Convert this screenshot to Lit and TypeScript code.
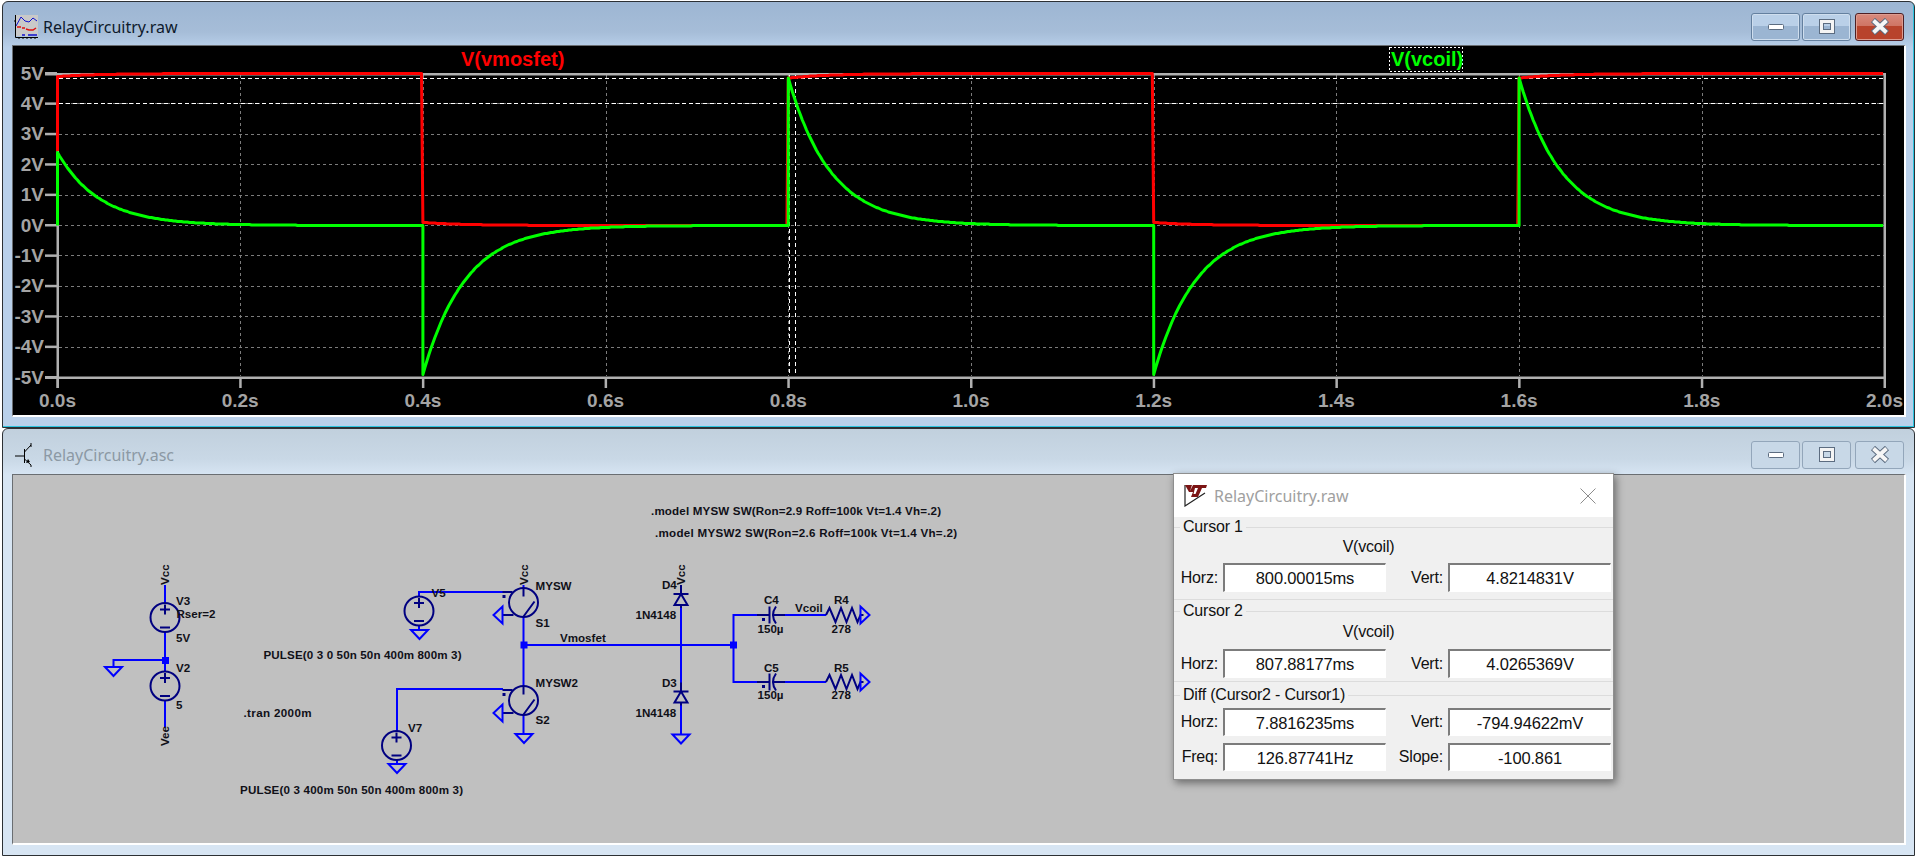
import { LitElement, css, html, svg } from "lit";
import { customElement } from "lit/decorators.js";

// plot scale: page coordinates, the svg viewBox starts at the plot's corner
const px = (t: number) => 57.5 + t * 913.5;
const py = (v: number) => 225.5 - v * 30.4;
const TAU = 0.046;

const pulses = [
  { t: 0, peak: 2.4 },
  { t: 0.4, peak: -4.9 },
  { t: 0.8, peak: 4.85 },
  { t: 1.2, peak: -4.9 },
  { t: 1.6, peak: 4.85 },
];

function decayPoints(t0: number, t1: number, fn: (dt: number) => number) {
  const out: string[] = [];
  for (let x = px(t0); x <= px(t1) + 0.01; x += 2) {
    const dt = (x - px(t0)) / 913.5;
    out.push(`${x.toFixed(1)},${(Math.round(py(fn(dt)) * 2) / 2).toFixed(1)}`);
  }
  return out;
}

function greenTrace() {
  const pts: string[] = [];
  pulses.forEach((p) => {
    pts.push(`${px(p.t)},${py(0)}`);
    pts.push(...decayPoints(p.t, p.t + 0.4, (dt) => p.peak * Math.exp(-dt / TAU)));
  });
  return pts.join(" ");
}

function redTrace() {
  const pts: string[] = [`${px(0)},${py(2.45)}`];
  pulses.forEach((p, i) => {
    const high = i % 2 === 0;
    const gap = i === 0 ? 0.1 : 0.15;
    pts.push(
      ...decayPoints(p.t, p.t + 0.4, (dt) =>
        high ? 5 - gap * Math.exp(-dt / TAU) : 0.1 * Math.exp(-dt / TAU)
      )
    );
  });
  return pts.join(" ");
}

const volts = [5, 4, 3, 2, 1, 0, -1, -2, -3, -4, -5];
const times = [0, 0.2, 0.4, 0.6, 0.8, 1.0, 1.2, 1.4, 1.6, 1.8, 2.0];

function plot() {
  return html`<svg class="canvas" viewBox="13 46 1891 369" width="1891" height="369">
    <rect x="13" y="46" width="1891" height="369" fill="#000"></rect>
    ${volts.slice(1, -1).map(
      (v) => svg`<line class="grid" x1="59" x2="1884" y1=${py(v)} y2=${py(v)}></line>`
    )}
    ${times.slice(1, -1).map(
      (t) =>
        svg`<line class="grid" x1=${Math.round(px(t)) + 0.5} x2=${Math.round(px(t)) + 0.5} y1="75" y2="376"></line>`
    )}
    <rect class="axis" x="56.5" y="73" width="2.5" height="315"></rect>
    <rect class="axis" x="1883.5" y="73" width="2.5" height="305"></rect>
    <rect class="axis" x="45" y="73" width="1841" height="2.5"></rect>
    <rect class="axis" x="45" y="376.5" width="1841" height="2.5"></rect>
    ${volts.map(
      (v) => svg`<rect class="axis" x="45" y=${py(v) - 1.5} width="12" height="2.5"></rect>
        <text class="tick" x="44" y=${py(v) + 6} text-anchor="end">${v}V</text>`
    )}
    ${times.map(
      (t) => svg`<rect class="axis" x=${px(t) - 1} y="377" width="2.5" height="11"></rect>
        <text class="tick" x=${px(t)} y="406.5" text-anchor="middle">${t.toFixed(1)}s</text>`
    )}
    <line class="cursor" x1="59" x2="1884" y1="78.5" y2="78.5"></line>
    <line class="cursor" x1="59" x2="1884" y1="103.5" y2="103.5"></line>
    <line class="cursor" x1="789.5" x2="789.5" y1="75" y2="376"></line>
    <line class="cursor" x1="795.5" x2="795.5" y1="75" y2="376"></line>
    <polyline class="trace" stroke="#ff0000" points=${redTrace()}></polyline>
    <polyline class="trace" stroke="#00ff00" points=${greenTrace()}></polyline>
    <text class="legend" x="461" y="66" fill="#ff0000">V(vmosfet)</text>
    <rect class="focus" x="1389.5" y="47.5" width="73" height="24"></rect>
    <text class="legend" x="1391" y="66" fill="#00ff00">V(vcoil)</text>
  </svg>`;
}

// schematic parts, all drawn around their page position
const wire = (d: string) => svg`<path class="wire" d=${d}></path>`;
const part = (d: string) => svg`<path class="part" d=${d}></path>`;
const dot = (x: number, y: number) =>
  svg`<rect x=${x - 3.5} y=${y - 3.5} width="7" height="7" fill="#0000ff"></rect>`;
const label = (x: number, y: number, t: string) =>
  svg`<text class="lbl" x=${x} y=${y}>${t}</text>`;
// long directive lines: width measured off the reference
const directive = (x: number, y: number, w: number, t: string) =>
  svg`<text class="lbl" x=${x} y=${y} textLength=${w} lengthAdjust="spacing">${t}</text>`;
const vlabel = (x: number, y: number, t: string) =>
  svg`<text class="lbl" x=${x} y=${y} transform="rotate(-90 ${x} ${y})">${t}</text>`;

const source = (x: number, y: number) => svg`
  <circle class="part" cx=${x} cy=${y} r="14.5"></circle>
  ${part(`M${x - 5} ${y - 8}h10M${x} ${y - 13}v10M${x - 5} ${y + 10}h10`)}`;

const groundDown = (x: number, y: number) =>
  wire(`M${x - 8.5} ${y}h17l-8.5 9z`);
const groundLeft = (x: number, y: number) =>
  wire(`M${x} ${y - 8.5}v17l-9 -8.5z`);
const groundRight = (x: number, y: number) =>
  wire(`M${x} ${y - 8.5}v17l9 -8.5z`);

const switchPart = (x: number, y: number) => svg`
  <circle class="part" cx=${x} cy=${y} r="14.5"></circle>
  ${part(
    `M${x} ${y - 14}v8M${x} ${y + 14}L${x + 11} ${y - 1}M${x - 21} ${y - 10.5}h10M${x - 21} ${y + 12.5}h11`
  )}
  <rect x=${x - 21} y=${y - 7.5} width="3" height="3" fill="#000080"></rect>`;

const diode = (x: number, y: number) =>
  part(`M${x} ${y - 9}v9M${x - 7.5} ${y}h15M${x} ${y}l-6.5 11h13zM${x} ${y + 11}v3`);

const cap = (y: number) => svg`
  ${part(`M757 ${y}h12.5M769.5 ${y - 8.5}v17M776 ${y - 8.5}Q770 ${y} 776 ${y + 8.5}M773 ${y}h12`)}
  <rect x="762" y=${y + 3} width="3" height="3" fill="#000080"></rect>`;

const resistor = (y: number) =>
  part(
    `M826 ${y}l3.5 -7l6 14l5.5 -14l5.5 14l5.5 -14l5.5 14l3 -7h3`
  );

function schematic() {
  return html`<svg class="canvas" viewBox="13 475 1891 368" width="1891" height="368">
    <rect x="13" y="475" width="1891" height="368" fill="#c0c0c0"></rect>

    ${wire("M165 585V603M165 632V672M165 700V727M165 660H113.5V667")}
    ${source(165, 617.5)} ${source(165, 686)} ${groundDown(113.5, 667)} ${dot(165.5, 660.5)}
    ${vlabel(168.5, 585, "Vcc")} ${vlabel(168.5, 746, "Vee")}
    ${label(176, 605, "V3")} ${label(176.5, 618, "Rser=2")} ${label(176, 642, "5V")}
    ${label(176, 672, "V2")} ${label(176, 709, "5")}

    ${wire("M419 597V592H503M419 625V630")} ${source(419, 611)} ${groundDown(419.5, 630)}
    ${label(431.5, 597, "V5")}
    ${wire("M397 731V689H503M397 760V764")} ${source(396.5, 745.5)} ${groundDown(397, 764)}
    ${label(408, 732, "V7")}

    ${wire("M523.5 585V589M523.5 617V686M523.5 715V734")}
    ${switchPart(523.5, 602.5)} ${switchPart(523.5, 700.5)}
    ${groundLeft(502.5, 615)} ${groundLeft(502.5, 713)} ${groundDown(524, 734)}
    ${vlabel(527.5, 585, "Vcc")}
    ${label(535.5, 590, "MYSW")} ${label(535.5, 627, "S1")}
    ${label(535.5, 687, "MYSW2")} ${label(535.5, 724, "S2")}
    ${directive(263.5, 659, 198, "PULSE(0 3 0 50n 50n 400m 800m 3)")}
    ${directive(243.5, 717, 68, ".tran 2000m")}
    ${directive(240, 794, 223, "PULSE(0 3 400m 50n 50n 400m 800m 3)")}
    ${directive(651, 515, 290, ".model MYSW SW(Ron=2.9 Roff=100k Vt=1.4 Vh=.2)")}
    ${directive(655, 537, 302, ".model MYSW2 SW(Ron=2.6 Roff=100k Vt=1.4 Vh=.2)")}

    ${wire("M524 645H733M681 608V688M681 705V734M757 615H733.5V682H757M785 615H826M785 682H826")}
    ${dot(524, 645)} ${dot(733.5, 645)}
    ${label(560, 642, "Vmosfet")}
    ${diode(681, 594)} ${diode(681, 691.5)} ${groundDown(681, 734.5)}
    ${vlabel(684.5, 585, "Vcc")}
    ${label(662, 589, "D4")} ${label(635.5, 619, "1N4148")}
    ${label(662, 687, "D3")} ${label(635.5, 717, "1N4148")}

    ${cap(615)} ${cap(682)} ${resistor(615)} ${resistor(682)}
    ${groundRight(860.5, 615)} ${groundRight(860.5, 682)}
    ${label(764, 604, "C4")} ${label(757.5, 633, "150µ")} ${label(795, 612, "Vcoil")}
    ${label(834, 604, "R4")} ${label(831.5, 633, "278")}
    ${label(764, 672, "C5")} ${label(757.5, 699, "150µ")}
    ${label(834, 672, "R5")} ${label(831.5, 699, "278")}
  </svg>`;
}

const plotIcon = html`<svg class="icon" viewBox="0 0 24 24" width="24" height="24">
  <rect x="1" y="0" width="23" height="21" fill="#c9c9c9"></rect>
  <path d="M2 11L7 2L11 6L15 7L19 3L23 6" fill="none" stroke="#1010d0"></path>
  <path d="M3 12h4M8 13h3M12 14l3 1h4l3 -2" fill="none" stroke="#e01010" stroke-width="1.5"></path>
  <path d="M1.5 0V22.5H24M1.5 6h-1.5M5 22v2M9 22v2M13 22v2M17 22v2M21 22v2" fill="none" stroke="#000"></path>
  <path d="M8 20h3M14 20h9" fill="none" stroke="#1010d0" stroke-width="1.5"></path>
</svg>`;

const fetIcon = html`<svg class="icon" viewBox="0 0 24 24" width="24" height="24">
  <path d="M1 13H10M10.5 6V20M10.5 9L17 2M17 0V4M10.5 16L17 22V24" fill="none" stroke="#000"></path>
  <path d="M12 20l4 -1l-2 -3z" fill="#000"></path>
</svg>`;

const ltIcon = html`<svg viewBox="0 0 24 23" width="24" height="23">
  <path d="M1 1V22L21 9" fill="none" stroke="#222" stroke-width="1.2"></path>
  <path d="M1 1H8L6 7L9 1H23L22 4H18L14 13L7 13L9 8H5z" fill="#7b1414"></path>
  <path d="M11 4h3l-2.5 6h-2z" fill="#fff"></path>
</svg>`;

const glyphs = {
  min: html`<svg viewBox="0 0 20 10" width="20" height="10">
    <rect x="2.5" y="2.5" width="15" height="5" rx="1" fill="#fff" stroke="#5c6c80"></rect>
  </svg>`,
  max: html`<svg viewBox="0 0 20 18" width="20" height="18">
    <rect x="2.5" y="1.5" width="15" height="14" fill="none" stroke="#5c6c80" stroke-width="1"></rect>
    <rect x="4.5" y="3.5" width="11" height="10" fill="none" stroke="#f4f4f4" stroke-width="3"></rect>
    <rect x="6.5" y="5.5" width="7" height="6" fill="none" stroke="#5c6c80"></rect>
  </svg>`,
  close: html`<svg viewBox="0 0 20 18" width="20" height="18">
    <path d="M3 2L17 15M17 2L3 15" stroke="#5c6c80" stroke-width="6"></path>
    <path d="M3.5 2.5L16.5 14.5M16.5 2.5L3.5 14.5" stroke="#f6f6f6" stroke-width="4"></path>
  </svg>`,
};

function titleBar(icon: unknown, title: string) {
  return html`<div class="title-bar">
    <div class="caption">${icon}<span>${title}</span></div>
    <div class="buttons">
      <div class="btn">${glyphs.min}</div>
      <div class="btn">${glyphs.max}</div>
      <div class="btn close">${glyphs.close}</div>
    </div>
  </div>`;
}

function fieldRow(l1: string, v1: string, l2: string, v2: string) {
  return html`<div class="row">
    <span class="key">${l1}</span><div class="value">${v1}</div>
    <span class="key">${l2}</span><div class="value">${v2}</div>
  </div>`;
}

@customElement("app-root")
export class AppRoot extends LitElement {
  static styles = css`
    :host {
      display: block;
      width: 1919px;
      height: 858px;
      overflow: hidden;
      background: #fff;
      font-family: "Liberation Sans", Arial, sans-serif;
    }
    .stack {
      display: flex;
      flex-direction: column;
      padding: 1px 0 0 2px;
      width: 1913px;
    }
    .win {
      position: relative;
      border: 1px solid #2c3034;
      border-radius: 6px 6px 0 0;
      padding-bottom: 10px;
    }
    .active {
      background: linear-gradient(#9db6d3 0, #a6bdd8 30px, #b9d0ea 46px, #b9d0ea 100%);
      box-shadow: inset -1px -1px 0 #2cc4e0;
    }
    .inactive {
      background: linear-gradient(#c1d0dd 0, #c9d8e6 30px, #d7e5f3 46px, #d7e5f3 100%);
    }
    .title-bar {
      display: flex;
      justify-content: space-between;
      height: 43px;
      box-sizing: border-box;
      padding: 11px 10px 0 11px;
    }
    .inactive .title-bar {
      height: 45px;
      padding-top: 12px;
    }
    .caption {
      display: flex;
      align-items: flex-start;
      gap: 5px;
      font: 16px/24px "Noto Sans", sans-serif;
      color: #0e1a2c;
    }
    .inactive .caption {
      color: #8c99a4;
    }
    .icon {
      margin-top: 2px;
    }
    .caption span {
      margin-top: 2px;
    }
    .buttons {
      display: flex;
      gap: 2px;
    }
    .btn {
      width: 49px;
      height: 28px;
      box-sizing: border-box;
      border: 1px solid #64809f;
      border-radius: 3px;
      display: flex;
      align-items: center;
      justify-content: center;
      background: linear-gradient(#bad0e8 0, #bad0e8 45%, #9bb5d2 46%, #9bb5d2 100%);
      box-shadow: inset 0 0 0 1px #cfdeee;
    }
    .btn.close {
      margin-left: 2px;
      border-color: #4e1f24;
      background: linear-gradient(#d98a7d 0, #cf7565 45%, #b8432c 46%, #b8432c 100%);
      box-shadow: inset 0 0 0 1px #dd9c90;
    }
    .inactive .btn {
      border-color: #93a6ba;
      background: #c8d8e7;
      box-shadow: none;
    }
    .frame {
      margin: 0 8px 0 9px;
      border-style: solid;
      border-width: 1px 2px 2px 1px;
      border-color: #6a6e72 #fff #fff #6a6e72;
      line-height: 0;
    }
    .canvas {
      display: block;
    }
    .grid {
      stroke: #7c7c7c;
      stroke-width: 1;
      stroke-dasharray: 3 3;
      shape-rendering: crispEdges;
    }
    .axis {
      fill: #b0b0b0;
    }
    .tick {
      font: bold 19px "Liberation Sans", Arial, sans-serif;
      fill: #a4a4a4;
    }
    .cursor {
      stroke: #fff;
      stroke-width: 1;
      stroke-dasharray: 4 3;
      shape-rendering: crispEdges;
    }
    .trace {
      fill: none;
      stroke-width: 3;
      stroke-linejoin: round;
    }
    .legend {
      font: bold 20px "Liberation Sans", Arial, sans-serif;
    }
    .focus {
      fill: none;
      stroke: #fff;
      stroke-dasharray: 2 2;
      shape-rendering: crispEdges;
    }
    .wire {
      fill: none;
      stroke: #0000ff;
      stroke-width: 2;
    }
    .part {
      fill: none;
      stroke: #000080;
      stroke-width: 2;
    }
    .lbl {
      font: bold 11.6px "Liberation Sans", Arial, sans-serif;
      fill: #101018;
    }
    .dialog {
      position: absolute;
      left: 1170px;
      top: 44px;
      width: 441px;
      height: 307px;
      box-sizing: border-box;
      border: 1px solid #8f8f8f;
      background: #f0f0f0;
      box-shadow: 2px 3px 8px rgba(0, 0, 0, 0.45);
      font-size: 16px;
      letter-spacing: -0.2px;
      color: #111;
    }
    .dlg-title {
      height: 43px;
      background: #fff;
      display: flex;
      align-items: center;
      padding: 0 17px 0 10px;
      gap: 6px;
      font: 16px "Noto Sans", sans-serif;
      letter-spacing: 0;
      color: #a0a0a0;
    }
    .dlg-title span {
      flex: 1;
    }
    .group {
      display: flex;
      flex-direction: column;
      border-bottom: 1px solid #dcdcdc;
    }
    .group.g1 {
      padding-bottom: 7px;
    }
    .group.g2 {
      padding: 1px 0 3px;
    }
    .group.g3 {
      padding-top: 3px;
      border-bottom: none;
      gap: 7px;
    }
    .heading {
      display: flex;
      align-items: center;
      height: 20px;
      gap: 3px;
    }
    .heading::before {
      content: "";
      width: 6px;
      height: 1px;
      background: #dcdcdc;
    }
    .heading::after {
      content: "";
      flex: 1;
      height: 1px;
      background: #dcdcdc;
    }
    .g3 .heading {
      margin-bottom: -4px;
    }
    .series {
      text-align: center;
      height: 20px;
      line-height: 20px;
      padding-right: 50px;
      margin-bottom: 6px;
    }
    .g2 .series {
      margin: 1px 0 7px;
    }
    .row {
      display: grid;
      grid-template-columns: 49px 163px 62px 163px;
      align-items: center;
    }
    .key {
      text-align: right;
      padding-right: 5px;
    }
    .value {
      height: 29px;
      box-sizing: border-box;
      border-style: solid;
      border-width: 2px 1px 1px 2px;
      border-color: #7c7c7c #fff #fff #7c7c7c;
      background: #fff;
      text-align: center;
      font-size: 16.5px;
      letter-spacing: -0.15px;
      line-height: 27px;
      color: #111;
    }
    .g3 .value {
      height: 28px;
      line-height: 26px;
    }
  `;

  render() {
    return html`<div class="stack">
      <div class="win active">
        ${titleBar(plotIcon, "RelayCircuitry.raw")}
        <div class="frame">${plot()}</div>
      </div>
      <div class="win inactive">
        ${titleBar(fetIcon, "RelayCircuitry.asc")}
        <div class="frame">${schematic()}</div>
        <div class="dialog">
          <div class="dlg-title">
            ${ltIcon}<span>RelayCircuitry.raw</span>
            <svg viewBox="0 0 16 16" width="16" height="16">
              <path d="M0.5 0.5L15.5 15.5M15.5 0.5L0.5 15.5" stroke="#8c8c8c"></path>
            </svg>
          </div>
          <div class="group g1">
            <div class="heading">Cursor 1</div>
            <div class="series">V(vcoil)</div>
            ${fieldRow("Horz:", "800.00015ms", "Vert:", "4.8214831V")}
          </div>
          <div class="group g2">
            <div class="heading">Cursor 2</div>
            <div class="series">V(vcoil)</div>
            ${fieldRow("Horz:", "807.88177ms", "Vert:", "4.0265369V")}
          </div>
          <div class="group g3">
            <div class="heading">Diff (Cursor2 - Cursor1)</div>
            ${fieldRow("Horz:", "7.8816235ms", "Vert:", "-794.94622mV")}
            ${fieldRow("Freq:", "126.87741Hz", "Slope:", "-100.861")}
          </div>
        </div>
      </div>
    </div>`;
  }
}
